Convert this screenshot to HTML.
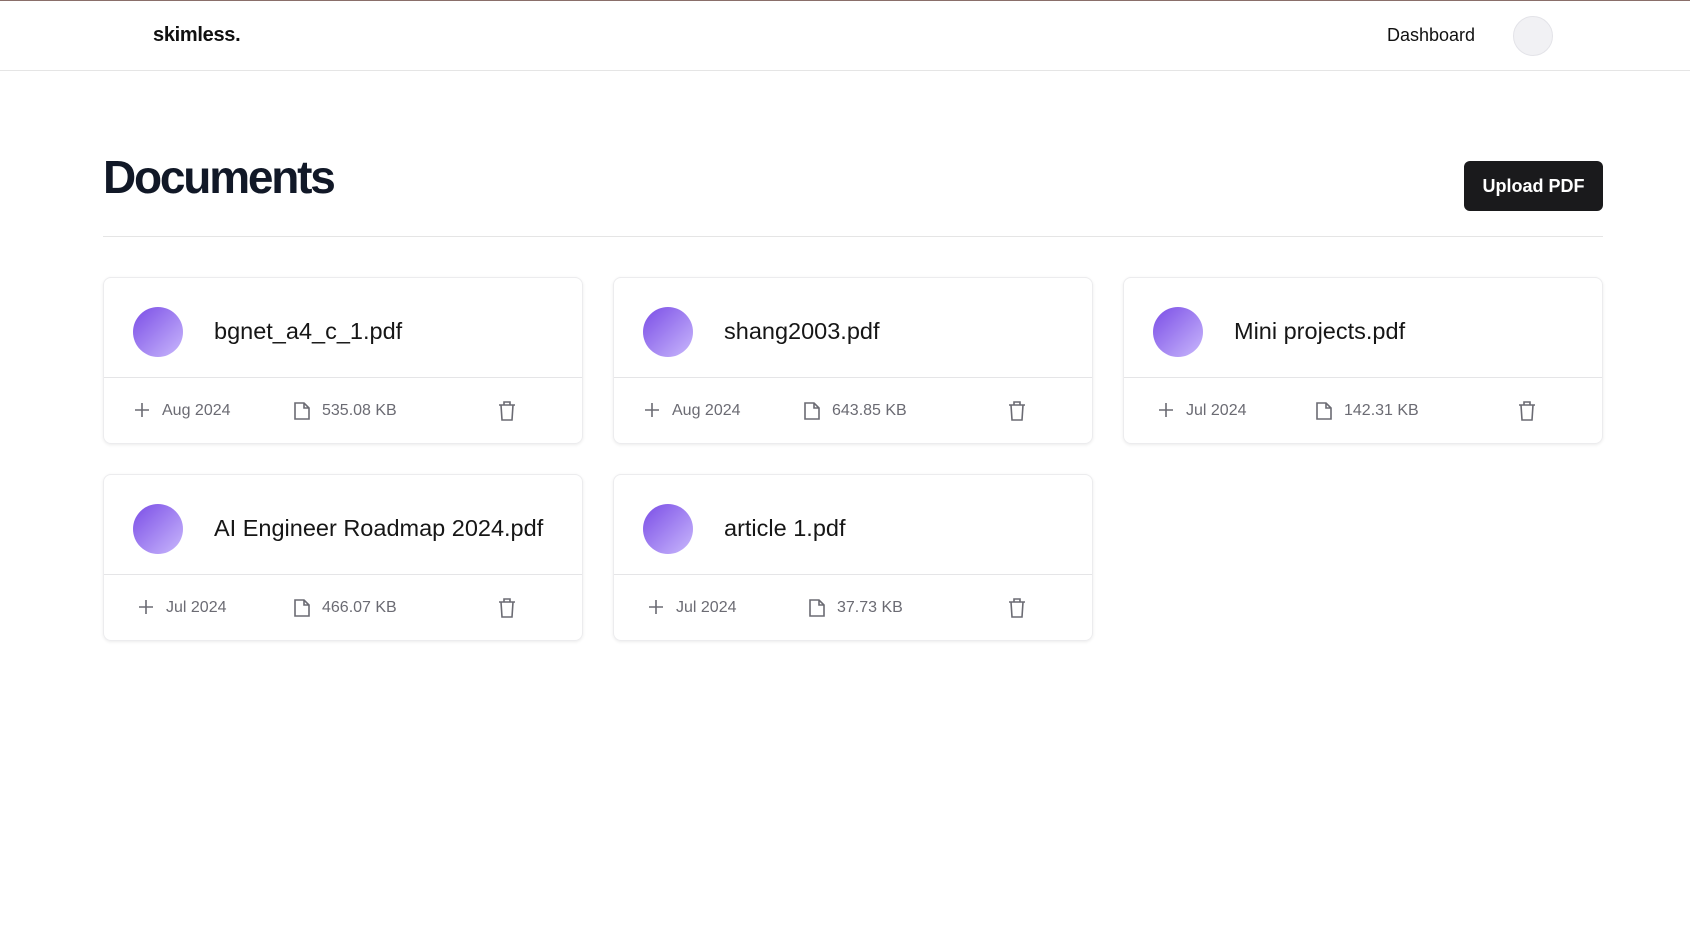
<!DOCTYPE html>
<html><head><meta charset="utf-8"><style>
*{box-sizing:border-box;margin:0;padding:0}
body{width:1690px;height:941px;background:#fff;font-family:"Liberation Sans",sans-serif;color:#111;position:relative;overflow:hidden}
.line{position:absolute;left:0;top:0;width:1690px;height:1px;background:#8a6f6a}
.hdr{position:absolute;left:0;top:0;width:1690px;height:71px;border-bottom:1px solid #e5e5e5}
.logo{position:absolute;left:153px;top:24px;font-size:20px;font-weight:bold;letter-spacing:-0.3px}
.dash{position:absolute;left:1387px;top:25px;font-size:18px}
.av{position:absolute;left:1513px;top:16px;width:40px;height:40px;border-radius:50%;background:#f1f1f4;border:1px solid #e3e3e8}
h1{position:absolute;left:103px;top:150px;font-size:46px;font-weight:bold;letter-spacing:-2.2px;color:#111827}
.btn{position:absolute;left:1464px;top:161px;width:139px;height:50px;background:#1a1a1c;color:#fff;border-radius:6px;font-size:18px;font-weight:bold;text-align:center;line-height:50px}
.div{position:absolute;left:103px;top:236px;width:1500px;height:1px;background:#e5e5e5}
.card{position:absolute;width:480px;height:167px;border:1px solid #ececee;border-radius:8px;box-shadow:0 1px 3px rgba(0,0,0,0.08)}
.top{height:100px;border-bottom:1px solid #e5e5e7;position:relative}
.circ{position:absolute;left:29px;top:29px;width:50px;height:50px;border-radius:50%;background:linear-gradient(135deg,#7a4de6,#c9b8fc)}
.name{position:absolute;left:110px;top:40px;font-size:23.5px;color:#161616}
.foot{position:relative;height:66px;color:#6b6b73;font-size:16px}
.foot span{position:absolute;top:24px}
.foot svg{position:absolute;top:23px}
</style></head><body>
<div class="hdr"><div class="logo">skimless.</div><div class="dash">Dashboard</div><div class="av"></div></div>
<div class="line"></div>
<h1>Documents</h1>
<div class="btn">Upload PDF</div>
<div class="div"></div>

<div class="card" style="left:103px;top:277px"><div class="top"><div class="circ"></div><div class="name">bgnet_a4_c_1.pdf</div></div>
<div class="foot">
<svg style="left:29px" width="18" height="18" viewBox="0 0 18 18" fill="none" stroke="#6b6b73" stroke-width="1.6"><path d="M9 2v14M2 9h14"/></svg><span style="left:58px">Aug 2024</span>
<svg style="left:189px" width="18" height="20" viewBox="0 0 18 20" fill="none" stroke="#6b6b73" stroke-width="1.6"><path d="M2 2h9l5 5v11H2z M11 2v5h5"/></svg><span style="left:218px">535.08 KB</span>
<svg style="left:394px" width="18" height="20" viewBox="0 0 18 20" fill="none" stroke="#6b6b73" stroke-width="1.6"><path d="M1 4h16M6 4V1h6v3M3 4l1 15h10l1-15"/></svg></div></div>

<div class="card" style="left:613px;top:277px"><div class="top"><div class="circ"></div><div class="name">shang2003.pdf</div></div>
<div class="foot">
<svg style="left:29px" width="18" height="18" viewBox="0 0 18 18" fill="none" stroke="#6b6b73" stroke-width="1.6"><path d="M9 2v14M2 9h14"/></svg><span style="left:58px">Aug 2024</span>
<svg style="left:189px" width="18" height="20" viewBox="0 0 18 20" fill="none" stroke="#6b6b73" stroke-width="1.6"><path d="M2 2h9l5 5v11H2z M11 2v5h5"/></svg><span style="left:218px">643.85 KB</span>
<svg style="left:394px" width="18" height="20" viewBox="0 0 18 20" fill="none" stroke="#6b6b73" stroke-width="1.6"><path d="M1 4h16M6 4V1h6v3M3 4l1 15h10l1-15"/></svg></div></div>

<div class="card" style="left:1123px;top:277px"><div class="top"><div class="circ"></div><div class="name">Mini projects.pdf</div></div>
<div class="foot">
<svg style="left:33px" width="18" height="18" viewBox="0 0 18 18" fill="none" stroke="#6b6b73" stroke-width="1.6"><path d="M9 2v14M2 9h14"/></svg><span style="left:62px">Jul 2024</span>
<svg style="left:191px" width="18" height="20" viewBox="0 0 18 20" fill="none" stroke="#6b6b73" stroke-width="1.6"><path d="M2 2h9l5 5v11H2z M11 2v5h5"/></svg><span style="left:220px">142.31 KB</span>
<svg style="left:394px" width="18" height="20" viewBox="0 0 18 20" fill="none" stroke="#6b6b73" stroke-width="1.6"><path d="M1 4h16M6 4V1h6v3M3 4l1 15h10l1-15"/></svg></div></div>

<div class="card" style="left:103px;top:474px"><div class="top"><div class="circ"></div><div class="name">AI Engineer Roadmap 2024.pdf</div></div>
<div class="foot">
<svg style="left:33px" width="18" height="18" viewBox="0 0 18 18" fill="none" stroke="#6b6b73" stroke-width="1.6"><path d="M9 2v14M2 9h14"/></svg><span style="left:62px">Jul 2024</span>
<svg style="left:189px" width="18" height="20" viewBox="0 0 18 20" fill="none" stroke="#6b6b73" stroke-width="1.6"><path d="M2 2h9l5 5v11H2z M11 2v5h5"/></svg><span style="left:218px">466.07 KB</span>
<svg style="left:394px" width="18" height="20" viewBox="0 0 18 20" fill="none" stroke="#6b6b73" stroke-width="1.6"><path d="M1 4h16M6 4V1h6v3M3 4l1 15h10l1-15"/></svg></div></div>

<div class="card" style="left:613px;top:474px"><div class="top"><div class="circ"></div><div class="name">article 1.pdf</div></div>
<div class="foot">
<svg style="left:33px" width="18" height="18" viewBox="0 0 18 18" fill="none" stroke="#6b6b73" stroke-width="1.6"><path d="M9 2v14M2 9h14"/></svg><span style="left:62px">Jul 2024</span>
<svg style="left:194px" width="18" height="20" viewBox="0 0 18 20" fill="none" stroke="#6b6b73" stroke-width="1.6"><path d="M2 2h9l5 5v11H2z M11 2v5h5"/></svg><span style="left:223px">37.73 KB</span>
<svg style="left:394px" width="18" height="20" viewBox="0 0 18 20" fill="none" stroke="#6b6b73" stroke-width="1.6"><path d="M1 4h16M6 4V1h6v3M3 4l1 15h10l1-15"/></svg></div></div>
</body></html>
